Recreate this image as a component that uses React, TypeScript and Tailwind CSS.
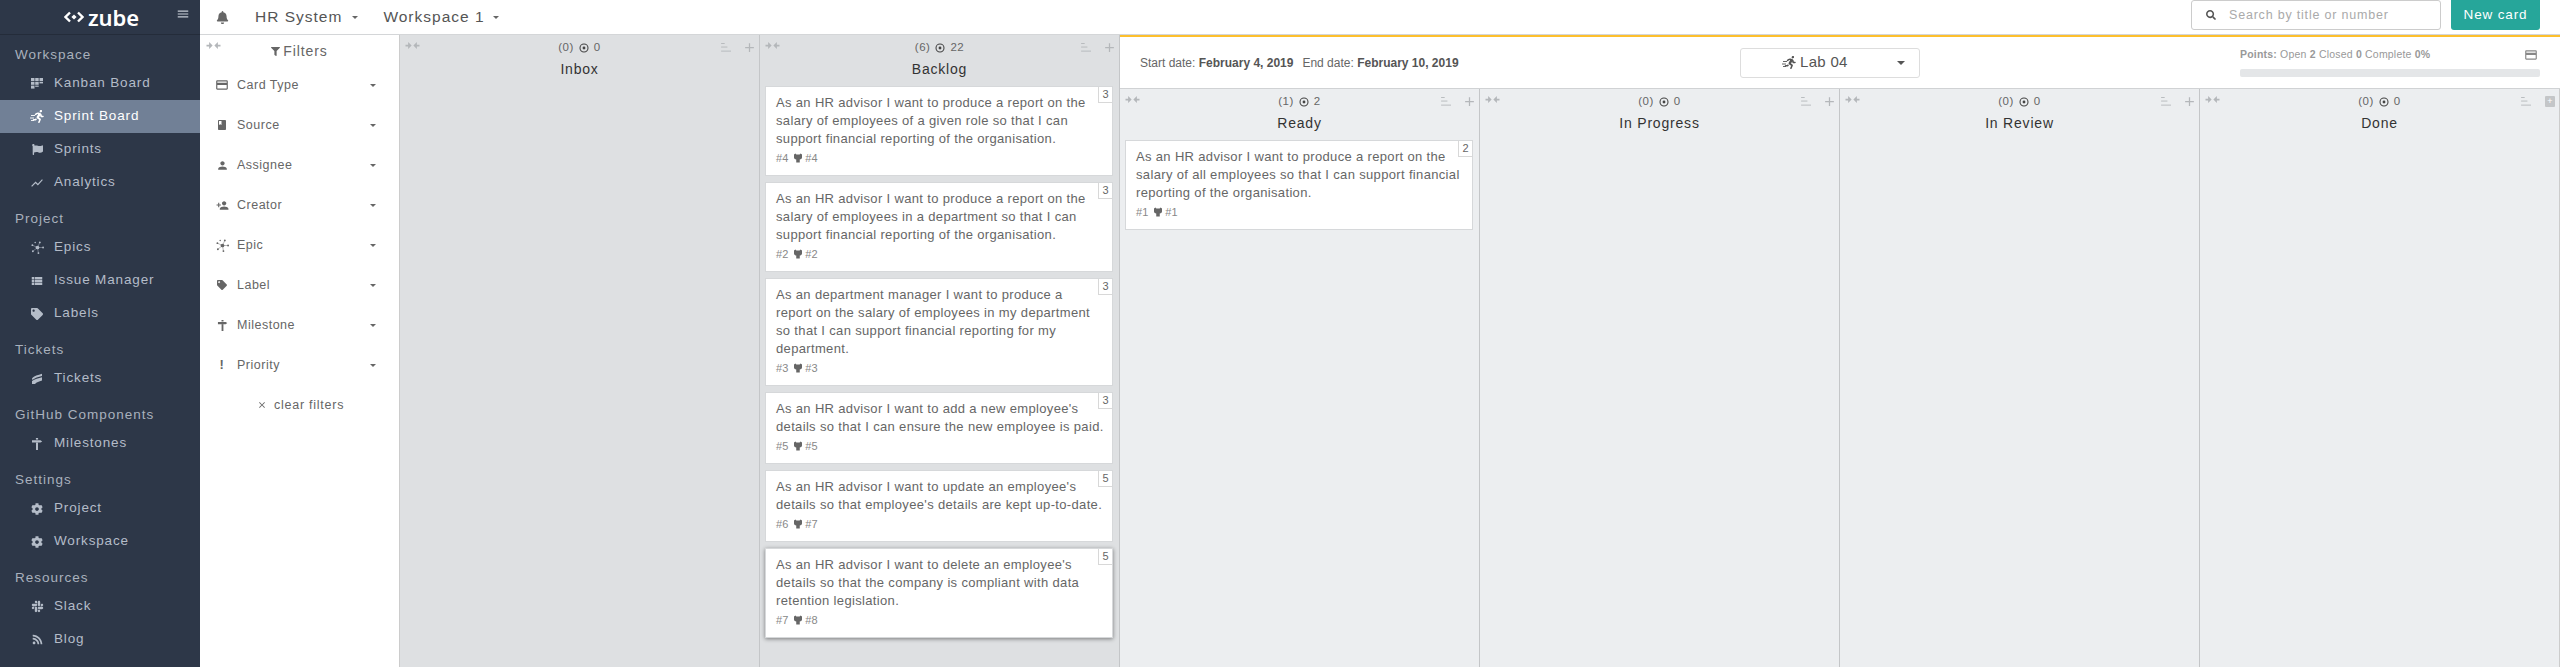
import React from "react";
import { FaBell, FaCog, FaFlag, FaRss, FaSlack, FaTag, FaSearch, FaFilter, FaRunning } from "react-icons/fa";
import { MdCreditCard, MdPerson, MdPersonAdd, MdShowChart, MdViewList, MdClose, MdMenu, MdAdd, MdBook } from "react-icons/md";

const F = { fontFamily: '"Liberation Sans", Arial, sans-serif' };

function Kanban() {
  return (
    <svg viewBox="0 0 12 12" className="w-[12px] h-[12px]" fill="currentColor">
      <rect x="0" y="0" width="3.5" height="3" /><rect x="4.2" y="0" width="3.5" height="3" /><rect x="8.5" y="0" width="3.5" height="3" />
      <rect x="0" y="3.8" width="3.5" height="3" /><rect x="4.2" y="3.8" width="3.5" height="3" /><rect x="8.5" y="3.8" width="3.5" height="1.6" />
      <rect x="0" y="7.6" width="3.5" height="3" /><rect x="4.2" y="7.6" width="3.5" height="1.2" />
    </svg>
  );
}
function Epic() {
  return (
    <svg viewBox="0 0 14 14" className="w-[13px] h-[13px]" fill="currentColor">
      <circle cx="7" cy="7" r="2" /><circle cx="1.5" cy="4.5" r="1" /><circle cx="9.5" cy="1.5" r="1" /><circle cx="13" cy="7" r="1" /><circle cx="8" cy="13" r="1" /><circle cx="2" cy="11" r="1" /><circle cx="4.5" cy="1.5" r="0.8" />
      <path d="M1.5 4.5L7 7M9.5 1.5L7 7M13 7H7M8 13L7 7M2 11L7 7" stroke="currentColor" strokeWidth="0.5" />
    </svg>
  );
}
function Ticket() {
  return (
    <svg viewBox="0 0 12 12" className="w-[12px] h-[12px]" fill="currentColor">
      <path d="M1 5.2 C3 3 7 2 11 .8 L11 3 C7.5 3.8 3.5 5 1.4 7 Z" /><path d="M1 8 C3.5 6 7.5 5 11 4.2 L11 7.6 C8 8.4 5.5 9.5 4 11 L1 11 Z" />
    </svg>
  );
}
function Milestone({ size = 12 }: { size?: number }) {
  return (
    <svg viewBox="0 0 12 12" width={size} height={size} fill="currentColor">
      <rect x="4.9" y="0" width="2.2" height="1.6" /><path d="M1 2.3H9.5L11.2 3.4L9.5 4.5H1Z" /><rect x="5" y="4.5" width="2" height="7.5" />
    </svg>
  );
}
function Target() {
  return (
    <svg viewBox="0 0 12 12" className="w-[10px] h-[10px]" fill="none" stroke="currentColor" strokeWidth="1.3">
      <circle cx="6" cy="6" r="4.8" /><circle cx="6" cy="6" r="1.7" fill="currentColor" stroke="none" />
    </svg>
  );
}
function Collapse() {
  return (
    <svg viewBox="0 0 16 8" className="w-[15px] h-[7px] text-[#b4b7ba]" fill="currentColor">
      <path d="M0 3H3V0L7 4L3 8V5H0Z" /><path d="M16 3H13V0L9 4L13 8V5H16Z" />
    </svg>
  );
}
function SortI() {
  return (
    <svg viewBox="0 0 12 10" className="w-[11px] h-[9px] text-[#b4b7ba]" fill="currentColor">
      <rect x="0" y="0" width="4" height="1" /><rect x="0" y="4" width="7" height="1" /><rect x="0" y="8.5" width="11" height="1" />
    </svg>
  );
}
function Octo() {
  return (
    <svg viewBox="0 0 10 11" className="w-[8px] h-[10px] mx-[3px]" fill="currentColor">
      <path d="M0 1L1.8 0L3 1H7L8.2 0L10 1V5C10 6.5 8.5 7.3 7.2 7.5V11H2.8V7.5C1.5 7.3 0 6.5 0 5Z" />
    </svg>
  );
}
function Sprint({ size = 13 }: { size?: number }) {
  return (
    <span className="inline-flex items-center">
      <svg viewBox="0 0 5 8" className="w-[5px] h-[8px] -mr-[3px] mt-[2px]" stroke="currentColor" strokeWidth="0.9">
        <path d="M1 1.5H5M0 4H4M1 6.5H4" />
      </svg>
      <FaRunning size={size} className="-skew-x-[8deg]" />
    </span>
  );
}
function Caret({ cls = "" }: { cls?: string }) {
  return <span className={`inline-block w-0 h-0 border-x-[3px] border-x-transparent border-t-[3px] border-t-[#666] ${cls}`} />;
}

const nav: [string, [React.ReactNode, string, boolean?][]][] = [
  ["Workspace", [[<Kanban />, "Kanban Board"], [<Sprint />, "Sprint Board", true], [<FaFlag size={11} />, "Sprints"], [<MdShowChart size={14} />, "Analytics"]]],
  ["Project", [[<Epic />, "Epics"], [<MdViewList size={14} />, "Issue Manager"], [<FaTag size={12} />, "Labels"]]],
  ["Tickets", [[<Ticket />, "Tickets"]]],
  ["GitHub Components", [[<Milestone />, "Milestones"]]],
  ["Settings", [[<FaCog size={12} />, "Project"], [<FaCog size={12} />, "Workspace"]]],
  ["Resources", [[<FaSlack size={13} />, "Slack"], [<FaRss size={11} />, "Blog"], [<MdBook size={13} />, ""]]],
];

function Sidebar() {
  return (
    <div className="w-[200px] shrink-0 h-screen overflow-hidden bg-[#2d3748] text-[#b4bcc8]">
      <div className="h-[35px] border-b border-[#242c3a] flex items-center relative">
        <div className="flex items-center ml-[64px] text-white">
          <svg viewBox="0 0 20 12" className="w-[20px] h-[12px]" fill="none" stroke="currentColor" strokeWidth="2.4">
            <path d="M6 1.5L1.5 6L6 10.5M14 1.5L18.5 6L14 10.5" />
            <path d="M10 3.4L12.6 6L10 8.6L7.4 6Z" fill="currentColor" stroke="none" />
          </svg>
          <span className="ml-[4px] text-[22px] leading-[30px] font-semibold tracking-[-0.1px]" style={{ fontFamily: '"Noto Sans", sans-serif' }}>zube</span>
        </div>
        <MdMenu size={14} className="absolute left-[176px] top-[7px] text-[#c8ced6]" />
      </div>
      {nav.map(([h, items]) => (
        <div key={h}>
          <div className="h-[32px] pl-[15px] pt-[8px] flex items-center text-[13.5px] tracking-[1px] text-[#a9b1bd]">{h}</div>
          {items.map(([ic, t, act]) => (
            <div key={t + h} className={`h-[33px] flex items-center text-[13.5px] tracking-[0.85px] ${act ? "bg-[#718096] text-white" : ""}`}>
              <span className="w-[54px] pl-[30px] flex"><span className="w-[14px] flex justify-center">{ic}</span></span>
              <span>{t}</span>
            </div>
          ))}
        </div>
      ))}
    </div>
  );
}

function TopBar() {
  return (
    <div className="h-[34px] flex items-center bg-white text-[#555]">
      <FaBell size={13} className="ml-[16px] text-[#666]" />
      <span className="ml-[26px] text-[15.5px] tracking-[1px]">HR System</span>
      <Caret cls="ml-[10px]" />
      <span className="ml-[25px] text-[15.5px] tracking-[1px]">Workspace 1</span>
      <Caret cls="ml-[8px]" />
      <div className="ml-auto mr-[10px] w-[250px] h-[30px] mb-[4px] border border-[#ccc] rounded-[3px] flex items-center">
        <FaSearch size={10} className="ml-[14px] text-[#555]" />
        <span className="ml-[13px] text-[12.5px] tracking-[0.8px] text-[#aaa]">Search by title or number</span>
      </div>
      <div className="mr-[20px] w-[89px] h-[30px] mb-[4px] bg-[#26a69a] rounded-b-[3px] flex items-center justify-center text-white text-[13.5px] tracking-[0.85px]">New card</div>
    </div>
  );
}

const filters: [React.ReactNode, string][] = [
  [<MdCreditCard size={14} />, "Card Type"], [<MdBook size={12} />, "Source"], [<MdPerson size={13} />, "Assignee"], [<MdPersonAdd size={13} />, "Creator"],
  [<Epic />, "Epic"], [<FaTag size={10} />, "Label"], [<Milestone size={11} />, "Milestone"], [<span className="font-bold text-[13px]">!</span>, "Priority"],
];

function Filters() {
  return (
    <div className="w-[200px] shrink-0 bg-white border-r border-[#ccc] text-[#666] relative">
      <div className="pl-[6px] pt-[7px]"><Collapse /></div>
      <div className="h-[18px] -mt-[7px] flex items-center justify-center text-[14px] tracking-[0.9px] gap-[3px]">
        <FaFilter size={9} />Filters
      </div>
      <div className="mt-[5px]">
        {filters.map(([ic, t]) => (
          <div key={t} className="h-[40px] flex items-center pl-[15px] pr-[23px] text-[12.5px] tracking-[0.5px]">
            <span className="w-[14px] flex justify-center mr-[8px]">{ic}</span>
            <span>{t}</span>
            <Caret cls="ml-auto" />
          </div>
        ))}
        <div className="h-[40px] flex items-center pl-[57px] text-[12.5px] tracking-[0.75px]">
          <MdClose size={10} className="mr-[7px]" />clear filters
        </div>
      </div>
    </div>
  );
}

type C = { t: string; n: string; a: string; b: string; hl?: boolean };

function Card({ c }: { c: C }) {
  return (
    <div className={`relative bg-white border border-[#d6d8da] pt-[7px] pl-[10px] pr-[7px] pb-[7px] ${c.hl ? "shadow-[0_1px_4px_rgba(0,0,0,0.45)]" : ""}`}>
      <div className="absolute top-0 right-0 w-[14px] h-[16px] border-l border-b border-[#d8d8d8] text-[11px] leading-[15px] text-center text-[#666]">{c.n}</div>
      <div className="text-[13px] leading-[18px] tracking-[0.34px] text-[#666] whitespace-pre-line">{c.t}</div>
      <div className="h-[20px] flex items-center text-[11px] text-[#888]">
        <span>#{c.a}</span><span className="text-[#666] ml-[3px]"><Octo /></span><span>#{c.b}</span>
      </div>
    </div>
  );
}

function Column({ title, count, pts, cards, bg, last }: { title: string; count: number; pts: number; cards: C[]; bg: string; last?: boolean }) {
  return (
    <div className={`flex-1 min-w-0 ${bg} ${last ? "border-r border-[#ccc]" : "border-r border-[#c4c6c8]"} relative`}>
      <div className="h-[51px] relative">
        <div className="absolute left-[5px] top-[7px]"><Collapse /></div>
        <div className="h-[23px] pt-[3px] flex items-center justify-center gap-[4px] text-[11.5px] tracking-[0.5px] text-[#666]">
          <span>({count})</span><span className="text-[#444] mx-[1px]"><Target /></span><span>{pts}</span>
        </div>
        <div className="h-[22px] flex items-center justify-center text-[14px] tracking-[0.8px] text-[#333]">{title}</div>
        <div className="absolute right-[27px] top-[8px]"><SortI /></div>
        <div className="absolute right-[2px] top-[5px] text-[#b4b7ba]">
          {last ? <div className="w-[10px] h-[11px] mr-[2px] mt-[2px] bg-[#c4c6c8] rounded-[1px] flex items-center justify-center text-white text-[9px] leading-none">+</div> : <MdAdd size={15} />}
        </div>
      </div>
      <div className="flex flex-col gap-[6px] pl-[5px] pr-[6px]">
        {cards.map((c) => <Card key={c.a} c={c} />)}
      </div>
    </div>
  );
}

const backlog: C[] = [
  { t: "As an HR advisor I want to produce a report on the salary of employees of a given role so that I can support financial reporting of the organisation.", n: "3", a: "4", b: "4" },
  { t: "As an HR advisor I want to produce a report on the salary of employees in a department so that I can support financial reporting of the organisation.", n: "3", a: "2", b: "2" },
  { t: "As an department manager I want to produce a\nreport on the salary of employees in my department\nso that I can support financial reporting for my\ndepartment.", n: "3", a: "3", b: "3" },
  { t: "As an HR advisor I want to add a new employee's details so that I can ensure the new employee is paid.", n: "3", a: "5", b: "5" },
  { t: "As an HR advisor I want to update an employee's details so that employee's details are kept up-to-date.", n: "5", a: "6", b: "7" },
  { t: "As an HR advisor I want to delete an employee's details so that the company is compliant with data retention legislation.", n: "5", a: "7", b: "8", hl: true },
];
const ready: C[] = [{ t: "As an HR advisor I want to produce a report on the salary of all employees so that I can support financial reporting of the organisation.", n: "2", a: "1", b: "1" }];

function SprintPanel() {
  return (
    <div className="flex-[4] min-w-0 flex flex-col bg-[#eceef0] border-t-2 border-t-[#fdbf2d]">
      <div className="h-[52px] bg-white border-b border-[#d0d2d4] flex items-center text-[#666] relative">
        <div className="ml-[20px] text-[12px] w-[600px] shrink-0">
          Start date: <b className="text-[#555]">February 4, 2019</b><span className="ml-[9px]">End date: </span><b className="text-[#555]">February 10, 2019</b>
        </div>
        <div className="w-[180px] h-[30px] border border-[#ddd] rounded-[3px] flex items-center pl-[41px] pr-[14px] text-[#555]">
          <span className="mr-[3px] flex"><Sprint /></span>
          <span className="text-[15px] tracking-[0.3px]">Lab 04</span>
          <span className="ml-auto inline-block w-0 h-0 border-x-[4px] border-x-transparent border-t-[4px] border-t-[#555]" />
        </div>
        <div className="ml-auto mr-[20px] w-[300px] text-[10.5px] tracking-[0.2px] text-[#999]">
          <div className="flex items-center h-[14px] mb-[7px]">
            <span><b>Points:</b> Open <b>2</b> Closed <b>0</b> Complete <b>0%</b></span>
            <MdCreditCard size={14} className="ml-auto mr-[2px] text-[#888]" />
          </div>
          <div className="h-[8px] bg-[#e4e6e8] rounded-[2px]" />
        </div>
      </div>
      <div className="flex flex-1">
        <Column title="Ready" count={1} pts={2} cards={ready} bg="bg-[#eceef0]" />
        <Column title="In Progress" count={0} pts={0} cards={[]} bg="bg-[#eceef0]" />
        <Column title="In Review" count={0} pts={0} cards={[]} bg="bg-[#eceef0]" />
        <Column title="Done" count={0} pts={0} cards={[]} bg="bg-[#eceef0]" last />
      </div>
    </div>
  );
}

export default function App() {
  return (
    <div className="flex h-screen overflow-hidden bg-white" style={F}>
      <Sidebar />
      <div className="flex-1 min-w-0 flex flex-col">
        <TopBar />
        <div className="flex flex-1 border-t border-[#d4d6d8]">
          <Filters />
          <div className="w-[360px] shrink-0 flex"><Column title="Inbox" count={0} pts={0} cards={[]} bg="bg-[#dee0e2]" /></div>
          <div className="w-[360px] shrink-0 flex"><Column title="Backlog" count={6} pts={22} cards={backlog} bg="bg-[#dee0e2]" /></div>
          <SprintPanel />
        </div>
      </div>
    </div>
  );
}
